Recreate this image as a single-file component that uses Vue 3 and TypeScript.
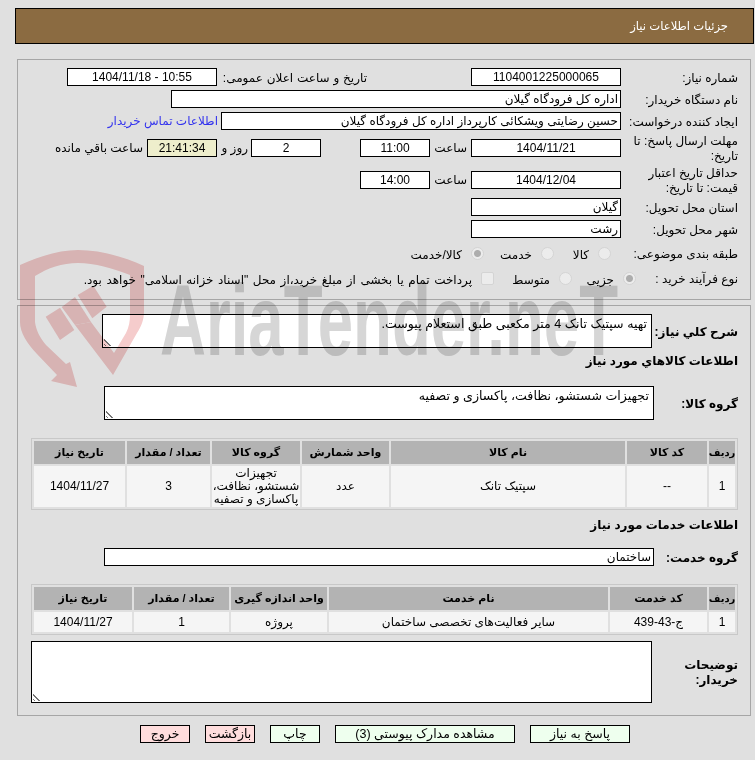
<script setup lang="ts">
interface Col { label: string; width: number }
const goodsCols: Col[] = [
  { label: 'ردیف', width: 26 }, { label: 'کد کالا', width: 80 }, { label: 'نام کالا', width: 234 },
  { label: 'واحد شمارش', width: 87 }, { label: 'گروه کالا', width: 88 }, { label: 'تعداد / مقدار', width: 83 }, { label: 'تاریخ نیاز', width: 91 }
]
const goodsRow = ['1', '--', 'سپتیک تانک', 'عدد', 'تجهیزات\nشستشو، نظافت،\nپاکسازی و تصفیه', '3', '1404/11/27']
const serviceCols: Col[] = [
  { label: 'ردیف', width: 26 }, { label: 'کد خدمت', width: 97 }, { label: 'نام خدمت', width: 279 },
  { label: 'واحد اندازه گیری', width: 96 }, { label: 'تعداد / مقدار', width: 95 }, { label: 'تاریخ نیاز', width: 98 }
]
const serviceRow = ['1', 'ج-43-439', 'سایر فعالیت‌های تخصصی ساختمان', 'پروژه', '1', '1404/11/27']
</script>

<template>
  <div class="page" dir="rtl">
    <header class="head">جزئیات اطلاعات نیاز</header>

    <section class="panel info">
      <div class="row r1">
        <label class="lb">شماره نیاز:</label>
        <div class="box w150 c">1104001225000065</div>
        <label class="lb lb2">تاریخ و ساعت اعلان عمومی:</label>
        <div class="box w150 c">10:55 - 1404/11/18</div>
      </div>
      <div class="row r1">
        <label class="lb">نام دستگاه خریدار:</label>
        <div class="box w450">اداره کل فرودگاه گیلان</div>
      </div>
      <div class="row r1">
        <label class="lb">ایجاد کننده درخواست:</label>
        <div class="box w400">حسین رضایتی ویشکائی کارپرداز اداره کل فرودگاه گیلان</div>
        <a class="link">اطلاعات تماس خریدار</a>
      </div>
      <div class="row r4">
        <label class="lb">مهلت ارسال پاسخ: تا تاریخ:</label>
        <div class="box w150 c">1404/11/21</div>
        <span class="hour">ساعت</span>
        <div class="box w70 c">11:00</div>
        <div class="box w70 c days">2</div>
        <span class="dayword">روز و</span>
        <div class="box w70 c timer">21:41:34</div>
        <span class="left-word">ساعت باقي مانده</span>
      </div>
      <div class="row r5">
        <label class="lb">حداقل تاریخ اعتبار قیمت: تا تاریخ:</label>
        <div class="box w150 c">1404/12/04</div>
        <span class="hour">ساعت</span>
        <div class="box w70 c">14:00</div>
      </div>
      <div class="row r6">
        <label class="lb">استان محل تحویل:</label>
        <div class="box w150">گیلان</div>
      </div>
      <div class="row r1">
        <label class="lb">شهر محل تحویل:</label>
        <div class="box w150">رشت</div>
      </div>
      <div class="row r8">
        <label class="lb wide">طبقه بندی موضوعی:</label>
        <span class="opt o57"><i class="radio"></i>کالا</span>
        <span class="opt o70"><i class="radio"></i>خدمت</span>
        <span class="opt"><i class="radio on"></i>کالا/خدمت</span>
      </div>
      <div class="row r9">
        <label class="lb narrow">نوع فرآیند خرید :</label>
        <span class="opt o64"><i class="radio on"></i>جزیی</span>
        <span class="opt o78"><i class="radio"></i>متوسط</span>
        <span class="opt spaced"><i class="check"></i>پرداخت تمام یا بخشی از مبلغ خرید،از محل "اسناد خزانه اسلامی" خواهد بود.</span>
      </div>
    </section>

    <section class="panel detail">
      <div class="line summary">
        <label class="blb b86">شرح کلي نیاز:</label>
        <div class="area a550 top">تهیه سپتیک تانک 4 متر مکعبی طبق استعلام پیوست.<span class="grip"></span></div>
      </div>
      <h3 class="title t1">اطلاعات کالاهاي مورد نیاز</h3>
      <div class="line goods">
        <label class="blb b84">گروه کالا:</label>
        <div class="area a550 top">تجهیزات شستشو، نظافت، پاکسازی و تصفیه<span class="grip"></span></div>
      </div>
      <div class="tbl g">
        <div class="tr th h23">
          <div v-for="c in goodsCols" :key="c.label" class="td" :style="{ width: c.width + 'px' }">{{ c.label }}</div>
        </div>
        <div class="tr h41">
          <div v-for="(v, i) in goodsRow" :key="i" class="td" :style="{ width: goodsCols[i].width + 'px' }">{{ v }}</div>
        </div>
      </div>
      <h3 class="title t2">اطلاعات خدمات مورد نیاز</h3>
      <div class="line service">
        <label class="blb b84">گروه خدمت:</label>
        <div class="box w550">ساختمان</div>
      </div>
      <div class="tbl s">
        <div class="tr th h23">
          <div v-for="c in serviceCols" :key="c.label" class="td" :style="{ width: c.width + 'px' }">{{ c.label }}</div>
        </div>
        <div class="tr h20">
          <div v-for="(v, i) in serviceRow" :key="i" class="td" :style="{ width: serviceCols[i].width + 'px' }">{{ v }}</div>
        </div>
      </div>
      <div class="line notes">
        <label class="blb b86 twol">توضیحات خریدار:</label>
        <div class="area a621"><span class="grip"></span></div>
      </div>
    </section>

    <footer class="actions">
      <button class="btn ok w100">پاسخ به نیاز</button>
      <button class="btn ok w180">مشاهده مدارک پیوستی (3)</button>
      <button class="btn ok w50">چاپ</button>
      <button class="btn no w50">بازگشت</button>
      <button class="btn no w50">خروج</button>
    </footer>

    <svg class="mark" width="700" height="200" viewBox="0 240 700 200" aria-hidden="true">
      <g class="shield">
        <path d="M20 265 C40 256 60 250 78 250 C100 250 125 257 144 266 L144 312 C144 320 141 327 137 333 L113 375 L75 325 L91 322 L114 353 L126 333 C129 327 130 321 130 315 L130 275 C112 268 95 263 78 263 C62 263 48 268 35 276 L35 322 C36 330 40 338 46 345 L66 364 L70 362 L77 387 L51 381 L57 375 L37 354 C27 343 20 333 20 322 Z" />
        <path d="M61.7 307 L75 297 L91 322 L75 325 Z" />
        <path d="M45.7 316.7 L60 307.7 L74.3 330 L60 340 Z" />
        <path d="M77.7 295 L93.3 285.7 L106.7 306.7 L92.3 318.3 Z" />
      </g>
      <text x="160" y="355" class="brand" textLength="458" lengthAdjust="spacingAndGlyphs">AriaTender.neT</text>
    </svg>
  </div>
</template>

<style scoped>
.page { position: relative; width: 755px; height: 760px; padding: 8px 1px 0 15px; box-sizing: border-box; background: #e0e0e0; color: #000; font: 12px "Liberation Sans", "DejaVu Sans", sans-serif; overflow: hidden; }
.head { height: 36px; box-sizing: border-box; border: 1px solid #000; background: #8b6b41; color: #fff; padding: 0 25px 0 0; line-height: 34px; font-size: 11.6px; }
.panel { box-sizing: border-box; width: 734px; margin-right: 3px; border: 1px solid #a6a6a6; }
.info { height: 241px; margin-top: 15px; padding: 8px 12px 0 0; }
.detail { height: 411px; margin-top: 5px; padding: 8px 12px 0 0; }
.row { display: flex; align-items: center; }
.r1 { height: 18px; margin-bottom: 4px; }
.r4 { height: 18px; margin-top: 9px; }
.r5 { height: 18px; margin-top: 14px; }
.r6 { height: 18px; margin-top: 9px; margin-bottom: 4px; }
.r8 { height: 18px; margin-top: 6px; }
.r9 { height: 18px; margin-top: 7px; }
.lb { width: 117px; flex: none; line-height: 15px; padding-top: 2px; }
.lb.wide { width: 127px; }
.lb.narrow { width: 102px; }
.lb2 { width: 150px; margin-right: 104px; word-spacing: .5px; }
.box { box-sizing: border-box; height: 18px; border: 1px solid #000; background: #fff; flex: none; padding: 0 2px; line-height: 16px; white-space: nowrap; overflow: hidden; }
.c { text-align: center; }
.w150 { width: 150px; }
.w450 { width: 450px; }
.w400 { width: 400px; }
.w70 { width: 70px; }
.w550 { width: 550px; }
.link { color: #3333ee; margin-right: 3px; white-space: nowrap; }
.hour { width: 37px; flex: none; margin-right: 4px; }
.days { margin-right: 39px; }
.dayword { width: 31px; padding-right: 3px; flex: none; }
.timer { background: #eeeecc; }
.left-word { margin-right: 4px; white-space: nowrap; }
.opt { display: flex; align-items: center; flex: none; white-space: nowrap; padding-top: 4px; }
.spaced { word-spacing: 1.2px; }
.o57 { width: 57px; }
.o64 { width: 64px; }
.o70 { width: 70px; }
.o78 { width: 78px; }
.radio { display: block; box-sizing: border-box; width: 13px; height: 13px; margin: -4px 0 0 9px; border-radius: 50%; border: 1px solid #d4d4d4; background: #ececec; flex: none; }
.radio.on { background: radial-gradient(circle, #adadad 0 3px, #ececec 4px); }
.check { display: block; box-sizing: border-box; width: 13px; height: 13px; margin: -4px 0 0 9px; border-radius: 2px; border: 1px solid #d4d4d4; background: #ececec; flex: none; }
.line { display: flex; align-items: center; }
.summary { height: 34px; }
.goods { height: 34px; margin-top: 17px; }
.service { height: 18px; margin-top: 15px; }
.notes { height: 62px; margin-top: 6px; }
.blb { flex: none; font-weight: 700; line-height: 15px; padding-top: 2px; }
.b86 { width: 86px; }
.b84 { width: 84px; }
.area { position: relative; box-sizing: border-box; height: 34px; border: 1px solid #000; background: #fff; padding: 1px 4px; flex: none; font-size: 12.6px; }
.a550 { width: 550px; }
.a621 { width: 621px; height: 62px; }
.top { line-height: 16px; }
.grip { position: absolute; left: 1px; bottom: 1px; width: 8px; height: 8px; clip-path: polygon(0 0, 0 100%, 100% 100%); background: repeating-linear-gradient(45deg, transparent 0 1px, #777 1px 2px, transparent 2px 3px); }
.title { margin: 0; font-size: 12px; font-weight: 700; line-height: 15px; padding-top: 1px; }
.t1 { margin-top: 5px; }
.t2 { margin-top: 7px; }
.tbl { box-sizing: border-box; width: 707px; border: 1px solid #c8c8c8; padding: 2px; display: flex; flex-direction: column; gap: 2px; }
.g { margin-top: 18px; }
.s { margin-top: 18px; }
.tr { display: flex; gap: 2px; }
.td { box-sizing: border-box; flex: none; background: #f5f5f5; display: flex; align-items: center; justify-content: center; text-align: center; line-height: 13px; padding: 0; white-space: pre-line; }
.th .td { background: #b3b3b3; font-weight: 700; font-size: 11px; white-space: nowrap; }
.th .td:first-child { font-size: 10px; }
.h23 { height: 23px; }
.h41 { height: 41px; }
.h20 { height: 20px; }
.actions { display: flex; gap: 15px; margin-top: 9px; padding-right: 124px; }
.btn { box-sizing: border-box; height: 18px; padding: 0; border: 1px solid #000; font: inherit; font-size: 12.5px; color: #000; line-height: 16px; }
.ok { background: #eeffee; }
.no { background: #ffdddd; }
.w100 { width: 100px; }
.w180 { width: 180px; }
.w50 { width: 50px; }
.mark { position: absolute; left: 0; top: 240px; pointer-events: none; direction: ltr; mix-blend-mode: multiply; }
.shield { fill: rgb(245, 204, 204); }
.brand { font: 700 100px "Liberation Sans", sans-serif; fill: #d6d6d6; direction: ltr; }
</style>

<style>
html, body { margin: 0; background: #e0e0e0; }
</style>
